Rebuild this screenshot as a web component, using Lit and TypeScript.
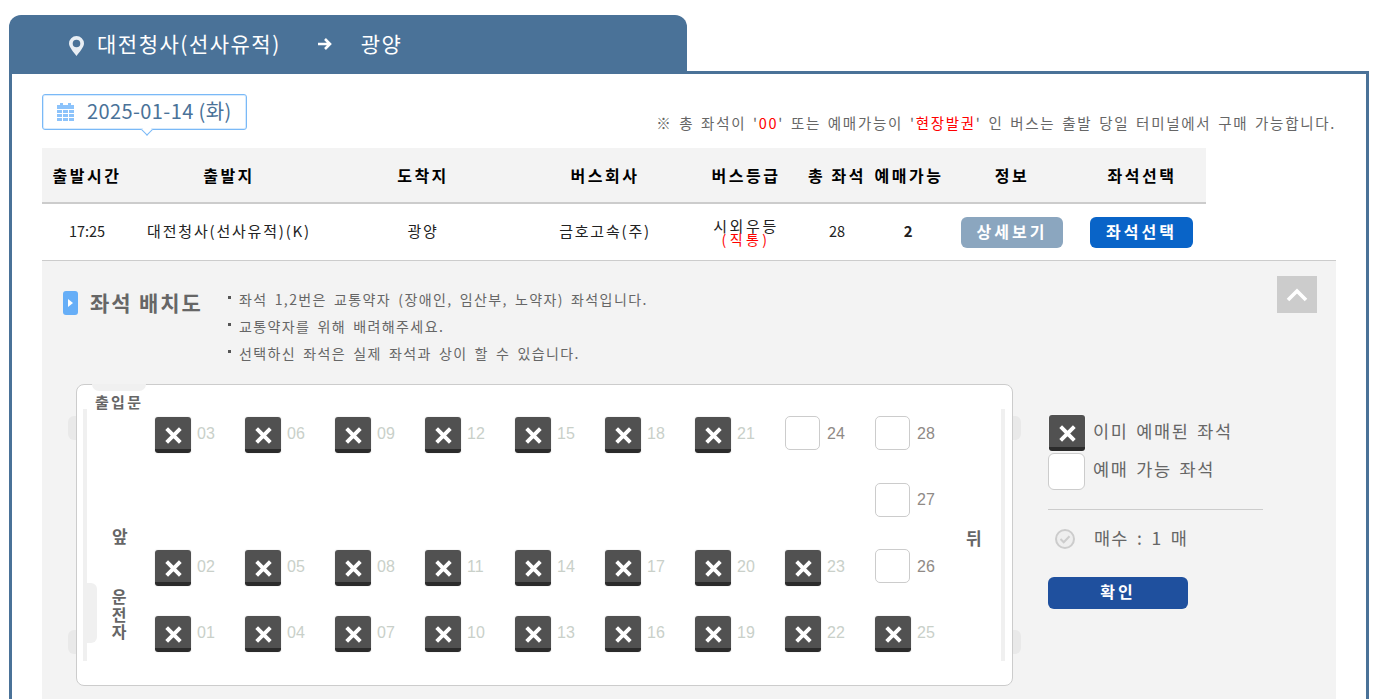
import { LitElement, html, css, svg } from "lit";
import { customElement } from "lit/decorators.js";

const xIcon = svg`<svg class="x" viewBox="0 0 20 20" width="21" height="21"><path d="M3.5 3.5 16.5 16.5M16.5 3.5 3.5 16.5" stroke="#fff" stroke-width="3.700" fill="none"/></svg>`;

type Seat = { n: string; free: boolean } | null;
const b = (n: string): Seat => ({ n, free: false });
const f = (n: string): Seat => ({ n, free: true });
const rows: Seat[][] = [
  [b("03"), b("06"), b("09"), b("12"), b("15"), b("18"), b("21"), f("24"), f("28")],
  [null, null, null, null, null, null, null, null, f("27")],
  [b("02"), b("05"), b("08"), b("11"), b("14"), b("17"), b("20"), b("23"), f("26")],
  [b("01"), b("04"), b("07"), b("10"), b("13"), b("16"), b("19"), b("22"), b("25")],
];

@customElement("app-root")
export class AppRoot extends LitElement {
  static styles = css`
    :host { display: block; height: 699px; overflow: hidden; padding: 15px 0 0 9px; box-sizing: border-box; font-family: "Noto Sans CJK KR", sans-serif; background: #fff; }
    .tab { width: 678px; height: 56px; box-sizing: border-box; background: #4a7298; border-radius: 12px 12px 0 0; display: flex; align-items: center; padding: 3px 0 0 60px; color: #fff; font-size: 21px; letter-spacing: 1.5px; }
    .tab span { padding-bottom: 3px; }
    .pin { margin: 2px 13px 0 0; }
    .arrow { margin: 0 29px 2px 36px; }
    .panel { width: 1360px; height: 640px; box-sizing: border-box; border: 3px solid #4a7298; padding: 20px 30px 0; background: #fff; }
    .top { display: flex; justify-content: space-between; align-items: flex-end; height: 54px; }
    .date { position: relative; width: 205px; height: 36px; box-sizing: border-box; border: 1px solid #7ab9f7; border-radius: 3px; display: flex; align-items: center; padding-left: 14px; margin-bottom: 18px; color: #4a7298; font-size: 20px; letter-spacing: 0.4px; box-shadow: 0 0 0 1px #d8ebfd inset; }
    .date span { padding-bottom: 3px; }
    .date svg { margin-right: 13px; }
    .date::after { content: ""; position: absolute; left: 100px; bottom: -5px; width: 7px; height: 7px; background: #fff; border-right: 1px solid #7ab9f7; border-bottom: 1px solid #7ab9f7; transform: rotate(45deg); }
    .notice { font-size: 14.5px; color: #666; letter-spacing: 1.7px; word-spacing: 1.9px; padding-bottom: 15px; line-height: 20px; white-space: nowrap; }
    .notice em { font-style: normal; color: #f00; }
    .grid { display: grid; grid-template-columns: 90px 194px 194px 170px 112px 70px 74px 132px 128px; width: 1164px; text-align: center; align-items: center; }
    .th { height: 54px; background: #f3f3f3; border-bottom: 2px solid #ccc; font-weight: 700; font-size: 16px; color: #000; letter-spacing: 2.5px; }
    .th > div { line-height: 50px; }
    .td { height: 56px; font-size: 15px; color: #222; letter-spacing: 1.8px; }
    .t { padding-bottom: 4px; }
    .time { letter-spacing: 0; font-size: 14.5px; }
    .n28 { letter-spacing: 0; font-size: 14.5px; }
    .grade { line-height: 14px; letter-spacing: 2.6px; }
    .grade span { display: block; color: #f00; font-size: 14px; line-height: 12px; letter-spacing: 3.4px; }
    .btn { display: inline-flex; align-items: center; justify-content: center; width: 102px; height: 31px; border-radius: 6px; color: #fff; font-weight: 700; font-size: 16px; letter-spacing: 3px; box-sizing: border-box; padding-bottom: 2px; }
    .btn.a { background: #8ba6bf; }
    .btn.c { background: #0964c8; width: 103px; margin-right: 1px; }
    .bold { font-weight: 700; }
    .detail { width: 1294px; height: 439px; border-top: 1px solid #ccc; background: #f3f3f3; box-sizing: border-box; }
    .dtop { display: flex; height: 123px; box-sizing: border-box; padding: 15px 19px 0 21px; }
    .head { display: flex; width: 165px; margin-top: 15px; height: 24px; align-items: center; }
    .mark { width: 15px; height: 24px; border-radius: 3px; background: #66aef7; display: flex; align-items: center; justify-content: center; margin-right: 12px; flex: none; }
    .mark i { border-left: 5px solid #fff; border-top: 4.5px solid transparent; border-bottom: 4.5px solid transparent; }
    .title { font-size: 21px; font-weight: 700; color: #666; letter-spacing: 1.9px; white-space: nowrap; line-height: 22px; padding-bottom: 2px; }
    .notes { margin: 10px 0 0; padding: 0; list-style: none; font-size: 14px; color: #666; letter-spacing: 1.4px; word-spacing: 2.6px; line-height: 27px; }
    .notes li { position: relative; padding-left: 11px; white-space: nowrap; }
    .notes li::before { content: ""; position: absolute; left: 0; top: 10px; width: 3px; height: 3px; background: #555; }
    .up { margin-left: auto; width: 40px; height: 37px; background: #ccc; display: flex; align-items: center; justify-content: center; }
    .dbody { display: flex; padding-left: 34px; align-items: flex-start; }
    .map { position: relative; width: 937px; height: 302px; box-sizing: border-box; background: #fff; border: 1px solid #ccc; border-radius: 8px; padding: 32px 0 0 78px; flex: none; }
    .lug { position: absolute; width: 8px; height: 24px; background: #e9e9e9; }
    .lug.l { left: -9px; border-radius: 6px 0 0 6px; }
    .lug.r { right: -9px; border-radius: 0 6px 6px 0; }
    .door { position: absolute; left: 15px; top: -1px; width: 54px; height: 7px; background: #f0f0f0; border-radius: 0 0 8px 8px; }
    .bar { position: absolute; top: 24px; width: 4px; height: 252px; background: #f0f0f0; }
    .bump { position: absolute; left: 8px; top: 198px; width: 12px; height: 60px; background: #f0f0f0; border-radius: 0 6px 6px 0; }
    .lbl { position: absolute; font-size: 15px; font-weight: 700; color: #666; line-height: 20px; white-space: nowrap; }
    .door-t { left: 18px; top: 7px; letter-spacing: 2.3px; }
    .front { left: 35px; top: 141px; font-size: 17px; }
    .driver { left: 34px; top: 203px; width: 16px; font-size: 16px; line-height: 17.5px; white-space: normal; text-align: center; }
    .back { left: 889px; top: 143px; font-size: 17px; }
    .seats { display: grid; grid-template-columns: repeat(9, 90px); grid-template-rows: 66px 67px 66px 66px; }
    .cell { display: flex; align-items: flex-start; }
    .seat { width: 36px; height: 36px; box-sizing: border-box; margin-right: 6px; flex: none; }
    .seat.bk { background: #515151; border-bottom: 4px solid #2b2b2b; border-radius: 3px; display: flex; align-items: center; justify-content: center; box-shadow: 0 0 0 1px #f6f6f6; padding-top: 4px; }
    .seat.fr { width: 35px; height: 34px; margin: -1px 7px 0 0; background: #fff; border: 1px solid #ccc; border-radius: 5px; }
    .seat.fr.low { margin-top: 0; }
    .num { font-family: "Liberation Sans", sans-serif; font-size: 16px; line-height: 33px; color: #c9d0c9; }
    .num.on { color: #8f8a86; }
    .side { margin-left: 35px; width: 215px; padding-top: 30px; }
    .lg { display: flex; align-items: center; height: 38px; font-size: 17.5px; color: #666; letter-spacing: 1.7px; word-spacing: 2px; }
    .lg span { padding-bottom: 6px; }
    .lg .seat { margin: 0 8px 0 1px; flex: none; }
    .lg .big { width: 37px; height: 37px; margin: 0 8px 0 0; background: #fff; border: 1px solid #ccc; border-radius: 6px; box-sizing: border-box; }
    .rule { height: 1px; background: #ccc; margin-top: 19px; }
    .cnt { display: flex; align-items: center; height: 28px; margin-top: 15px; padding-left: 7px; font-size: 17.5px; color: #666; letter-spacing: 1.2px; word-spacing: 3.3px; }
    .cnt span { padding-bottom: 4px; }
    .cnt svg { margin-right: 19px; }
    .ok { margin-top: 24px; width: 140px; height: 32px; background: #1f509e; border-radius: 6px; color: #fff; font-weight: 700; font-size: 16px; display: flex; align-items: center; justify-content: center; letter-spacing: 3px; box-sizing: border-box; padding-bottom: 4px; }
  `;

  render() {
    return html`
      <div class="tab">
        <svg class="pin" width="15" height="20" viewBox="0 0 15 20"><path fill-rule="evenodd" fill="#e8eef4" d="M7.500 0a7.500 7.500 0 0 1 7.500 7.500c0 3.800-4.800 8.700-7.500 12.500C4.800 16.200 0 11.300 0 7.500A7.500 7.500 0 0 1 7.500 0zM7.500 3.700a3.800 3.800 0 1 0 0 7.600a3.800 3.800 0 0 0 0-7.600z"/></svg>
        <span>대전청사(선사유적)</span>
        <svg class="arrow" width="15" height="14" viewBox="0 0 15 14"><path d="M1 7H13M8 2l5 5-5 5" stroke="#fff" stroke-width="2.600" fill="none"/></svg>
        <span>광양</span>
      </div>
      <div class="panel">
        <div class="top">
          <div class="date">
            <svg width="17" height="18" viewBox="0 0 17 18"><path fill="#8cc3fb" d="M3 0h3v3H3zM11 0h3v3h-3zM0 2h17v4H0zM0 7h5v3H0zM6 7h5v3H6zM12 7h5v3h-5zM0 11h5v3H0zM6 11h5v3H6zM12 11h5v3h-5zM0 15h5v3H0zM6 15h5v3H6zM12 15h5v3h-5z"/></svg>
            <span>2025-01-14 (화)</span>
          </div>
          <div class="notice">※ 총 좌석이 '<em>00</em>' 또는 예매가능이 '<em>현장발권</em>' 인 버스는 출발 당일 터미널에서 구매 가능합니다.</div>
        </div>
        <div class="grid th">
          <div>출발시간</div><div>출발지</div><div>도착지</div><div>버스회사</div><div>버스등급</div><div>총 좌석</div><div>예매가능</div><div>정보</div><div>좌석선택</div>
        </div>
        <div class="grid td">
          <div class="t time">17:25</div><div class="t">대전청사(선사유적)(K)</div><div class="t">광양</div><div class="t">금호고속(주)</div>
          <div class="grade">시외우등<span>(직통)</span></div>
          <div class="t n28">28</div><div class="t bold">2</div>
          <div><span class="btn a">상세보기</span></div>
          <div><span class="btn c">좌석선택</span></div>
        </div>
        <div class="detail">
          <div class="dtop">
            <div class="head"><span class="mark"><i></i></span><span class="title">좌석 배치도</span></div>
            <ul class="notes">
              <li>좌석 1,2번은 교통약자 (장애인, 임산부, 노약자) 좌석입니다.</li>
              <li>교통약자를 위해 배려해주세요.</li>
              <li>선택하신 좌석은 실제 좌석과 상이 할 수 있습니다.</li>
            </ul>
            <div class="up"><svg width="22" height="14" viewBox="0 0 22 14"><path d="M2 12 11 3l9 9" stroke="#fff" stroke-width="3.600" fill="none"/></svg></div>
          </div>
          <div class="dbody">
            <div class="map">
              <span class="lug l" style="top:31px"></span><span class="lug l" style="top:245px"></span>
              <span class="lug r" style="top:31px"></span><span class="lug r" style="top:245px"></span>
              <span class="door"></span>
              <span class="bar" style="left:6px"></span><span class="bar" style="left:924px"></span>
              <span class="bump"></span>
              <span class="lbl door-t">출입문</span>
              <span class="lbl front">앞</span>
              <span class="lbl driver">운전자</span>
              <span class="lbl back">뒤</span>
              <div class="seats">
                ${rows.map((r) => r.map((s) => html`<div class="cell">${s
                  ? html`<div class="seat ${s.free ? "fr" : "bk"} ${s.n === "27" ? "low" : ""}">${s.free ? "" : xIcon}</div><span class="num ${s.free ? "on" : ""}">${s.n}</span>`
                  : ""}</div>`))}
              </div>
            </div>
            <div class="side">
              <div class="lg"><div class="seat bk">${xIcon}</div><span>이미 예매된 좌석</span></div>
              <div class="lg"><div class="big"></div><span>예매 가능 좌석</span></div>
              <div class="rule"></div>
              <div class="cnt">
                <svg width="20" height="20" viewBox="0 0 20 20"><circle cx="10" cy="10" r="9" fill="#eee" stroke="#ccc" stroke-width="2"/><path d="M5.500 10l3.200 3.200 5.800-6" stroke="#ccc" stroke-width="2" fill="none"/></svg>
                <span>매수 : 1 매</span>
              </div>
              <div class="ok">확인</div>
            </div>
          </div>
        </div>
      </div>
    `;
  }
}
